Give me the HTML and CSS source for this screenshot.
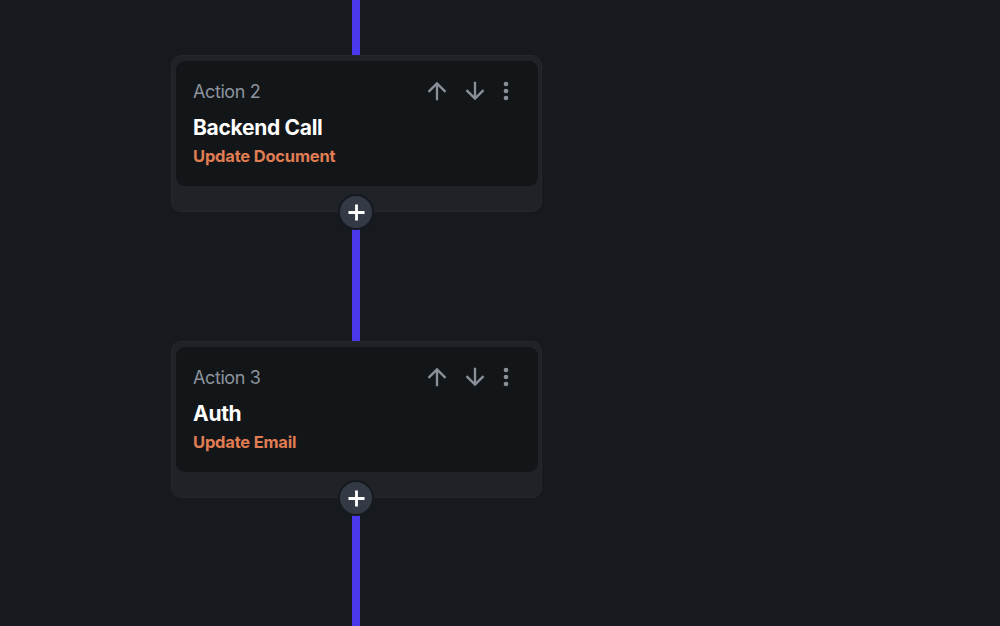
FILE: index.html
```html
<!DOCTYPE html>
<html>
<head>
<meta charset="utf-8">
<link rel="stylesheet" href="styles.css">
</head>
<body>
<div class="flow">
  <div class="line line-top"></div>
  <div class="step">
    <div class="card">
      <div class="head">
        <span class="label">Action 2</span>
        <div class="tools">
          <svg class="ic ic-up" viewBox="0 0 24 24"><path d="M4 12l1.41 1.41L11 7.83V20h2V7.83l5.58 5.59L20 12l-8-8-8 8z"/></svg>
          <svg class="ic ic-down" viewBox="0 0 24 24"><path d="M20 12l-1.41-1.41L13 16.17V4h-2v12.17l-5.58-5.59L4 12l8 8 8-8z"/></svg>
          <svg class="ic ic-more" viewBox="0 0 24 24"><circle cx="12" cy="6" r="2"/><circle cx="12" cy="12" r="2"/><circle cx="12" cy="18" r="2"/></svg>
        </div>
      </div>
      <div class="title">Backend Call</div>
      <div class="sub">Update Document</div>
    </div>
    <div class="add"><svg viewBox="0 0 18 18"><path d="M9 0.5v17M0.5 9h17"/></svg></div>
  </div>
  <div class="line line-mid"></div>
  <div class="step">
    <div class="card">
      <div class="head">
        <span class="label">Action 3</span>
        <div class="tools">
          <svg class="ic ic-up" viewBox="0 0 24 24"><path d="M4 12l1.41 1.41L11 7.83V20h2V7.83l5.58 5.59L20 12l-8-8-8 8z"/></svg>
          <svg class="ic ic-down" viewBox="0 0 24 24"><path d="M20 12l-1.41-1.41L13 16.17V4h-2v12.17l-5.58-5.59L4 12l8 8 8-8z"/></svg>
          <svg class="ic ic-more" viewBox="0 0 24 24"><circle cx="12" cy="6" r="2"/><circle cx="12" cy="12" r="2"/><circle cx="12" cy="18" r="2"/></svg>
        </div>
      </div>
      <div class="title">Auth</div>
      <div class="sub">Update Email</div>
    </div>
    <div class="add"><svg viewBox="0 0 18 18"><path d="M9 0.5v17M0.5 9h17"/></svg></div>
  </div>
  <div class="line line-bottom"></div>
</div>
</body>
</html>
```
FILE: styles.css
```css
html, body {
  margin: 0;
  padding: 0;
  background: #16191d;
  height: 100%;
  overflow: hidden;
}
body {
  font-family: "Inter", "Roboto", sans-serif;
}
.flow {
  width: 371px;
  margin-left: 171px;
  display: flex;
  flex-direction: column;
  align-items: center;
}
.line {
  width: 8px;
  background: #4a38ec;
  margin-right: 1px;
}
.line-top { height: 55px; }
.line-mid { height: 129px; }
.line-bottom { height: 140px; }
.step {
  position: relative;
  align-self: stretch;
  background: #1f2328;
  border-radius: 10px;
  padding: 5px 3px 25px 4px;
  border: 1px solid #24282d;
}
.card {
  background: #131619;
  border-radius: 9px;
  padding: 19px 18px 20px 17px;
  height: 86px;
}
.head {
  display: flex;
  align-items: center;
  justify-content: space-between;
  height: 22px;
}
.label {
  color: #8c939c;
  font-size: 18px;
  letter-spacing: -0.4px;
}
.tools {
  display: flex;
  align-items: center;
  margin-right: 0;
}
.ic {
  width: 28px;
  height: 28px;
  fill: #8a9099;
}
.ic-down { margin-left: 10px; }
.ic-more { margin-left: 3px; }
.title {
  color: #ffffff;
  font-weight: 700;
  font-size: 21px;
  letter-spacing: -0.3px;
  margin-top: 13px;
  line-height: 26px;
}
.sub {
  color: #e07d52;
  font-weight: 700;
  font-size: 16.5px;
  letter-spacing: -0.2px;
  margin-top: 4px;
  line-height: 22px;
}
.add {
  position: absolute;
  left: 50%;
  bottom: -19px;
  width: 32px;
  height: 32px;
  margin-left: -18.5px;
  border-radius: 50%;
  background: #343a45;
  border: 2px solid #16191d;
  z-index: 2;
  display: flex;
  align-items: center;
  justify-content: center;
}
.add svg {
  width: 17px;
  height: 17px;
  stroke: #ffffff;
  stroke-width: 3;
  fill: none;
}
```
